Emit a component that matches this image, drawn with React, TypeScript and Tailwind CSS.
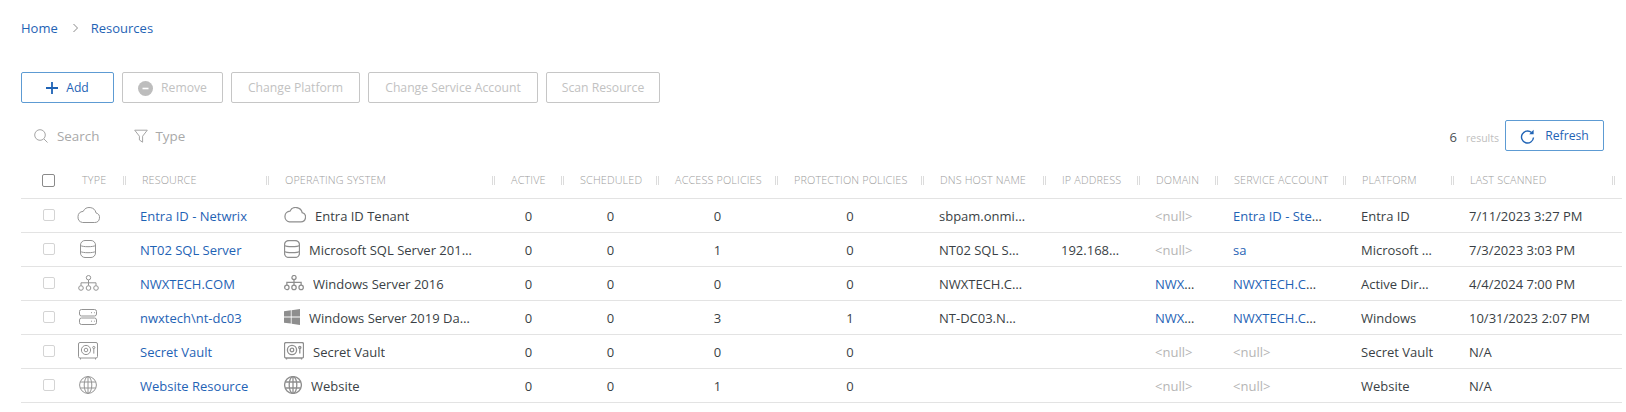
import React from "react";

const F = "font-['Open_Sans','Noto_Sans',sans-serif]";

type IP = { className?: string; w?: number };

const Cloud = ({ w = 23, className }: IP) => (
  <svg width={w} height={w * 16 / 23} viewBox="0 0 23 16" fill="none" stroke="currentColor" strokeWidth="1" className={className}>
    <path d="M5.6 15.5h12a4.9 4.9 0 0 0 1.4-9.6A6.8 6.8 0 0 0 6.2 4.4 5.6 5.6 0 0 0 5.6 15.5z" />
  </svg>
);
const Db = ({ w = 16, className }: IP) => (
  <svg width={w} height={w * 18 / 16} viewBox="0 0 16 18" fill="none" stroke="currentColor" strokeWidth="1" className={className}>
    <rect x="0.5" y="0.5" width="15" height="17" rx="4.5" />
    <path d="M0.5 5.5c2 1.6 13 1.6 15 0M0.5 11.5c2 1.6 13 1.6 15 0" />
  </svg>
);
const Tree = ({ w = 21, className }: IP) => (
  <svg width={w} height={w * 16 / 21} viewBox="0 0 21 16" fill="none" stroke="currentColor" strokeWidth="1" className={className}>
    <circle cx="10.5" cy="2.7" r="2.2" />
    <circle cx="3" cy="13" r="2.3" />
    <circle cx="10.5" cy="13" r="2.3" />
    <circle cx="18" cy="13" r="2.3" />
    <path d="M10.5 5v5.5M3 10.5V7.8h15v2.7" />
  </svg>
);
const ServerI = ({ w = 18, className }: IP) => (
  <svg width={w} height={w * 16 / 18} viewBox="0 0 18 16" fill="none" stroke="currentColor" strokeWidth="1" className={className}>
    <rect x="0.5" y="0.5" width="17" height="6.5" rx="2" />
    <rect x="0.5" y="9" width="17" height="6.5" rx="2" />
    <path d="M12 3.7h1M15 3.7h.8M12 12.2h1M15 12.2h.8" />
  </svg>
);
const Safe = ({ w = 20, className }: IP) => (
  <svg width={w} height={w * 18 / 20} viewBox="0 0 20 18" fill="none" stroke="currentColor" strokeWidth="1" className={className}>
    <rect x="0.5" y="0.5" width="19" height="15.5" rx="1.5" />
    <circle cx="8" cy="8" r="4.6" />
    <circle cx="8" cy="8" r="1.8" />
    <circle cx="15.8" cy="5.5" r="1.1" />
    <path d="M15.8 6.6v5M2.5 16v1.5M17.5 16v1.5" />
  </svg>
);
const Globe = ({ w = 18, className }: IP) => (
  <svg width={w} height={w} viewBox="0 0 18 18" fill="none" stroke="currentColor" strokeWidth="1" className={className}>
    <circle cx="9" cy="9" r="8.4" />
    <ellipse cx="9" cy="9" rx="3.8" ry="8.4" />
    <path d="M1.2 6h15.6M1.2 12h15.6M9 .6v16.8" />
  </svg>
);
const Win = ({ w = 16, className }: IP) => (
  <svg width={w} height={w} viewBox="0 0 16 16" fill="currentColor" className={className}>
    <path d="M0 2.3 6.8 1.3v6.2H0zM7.6 1.2 16 0v7.5H7.6zM0 8.4h6.8v6.2L0 13.7zM7.6 8.4H16V16l-8.4-1.2z" />
  </svg>
);

const Null = () => <span className="text-[#b5b5b5]">&lt;null&gt;</span>;
const Lnk = ({ children }: { children: React.ReactNode }) => <span className="text-[#1f63b5]">{children}</span>;

const cols = [
  ["", "w-[43px]"],
  ["TYPE", "w-[60px]"],
  ["RESOURCE", "w-[143px]"],
  ["OPERATING SYSTEM", "w-[226px]"],
  ["ACTIVE", "w-[69px]"],
  ["SCHEDULED", "w-[95px]"],
  ["ACCESS POLICIES", "w-[119px]"],
  ["PROTECTION POLICIES", "w-[146px]"],
  ["DNS HOST NAME", "w-[122px]"],
  ["IP ADDRESS", "w-[94px]"],
  ["DOMAIN", "w-[78px]"],
  ["SERVICE ACCOUNT", "w-[128px]"],
  ["PLATFORM", "w-[108px]"],
  ["LAST SCANNED", "w-[161px]"],
] as const;

const rows = [
  { T: Cloud, O: Cloud, ow: 22, res: "Entra ID - Netwrix", os: "Entra ID Tenant", a: 0, s: 0, ap: 0, pp: 0, dns: "sbpam.onmicrosoft.com", ip: "", dom: null, svc: "Entra ID - Steve Admin", plat: "Entra ID", last: "7/11/2023 3:27 PM" },
  { T: Db, O: Db, ow: 16, res: "NT02 SQL Server", os: "Microsoft SQL Server 2019 Standard", a: 0, s: 0, ap: 1, pp: 0, dns: "NT02 SQL Server", ip: "192.168.10.22", dom: null, svc: "sa", plat: "Microsoft SQL Server", last: "7/3/2023 3:03 PM" },
  { T: Tree, O: Tree, ow: 20, res: "NWXTECH.COM", os: "Windows Server 2016", a: 0, s: 0, ap: 0, pp: 0, dns: "NWXTECH.COM", ip: "", dom: "NWXTECH.COM", svc: "NWXTECH.COM Admin", plat: "Active Directory", last: "4/4/2024 7:00 PM" },
  { T: ServerI, O: Win, ow: 16, res: "nwxtech\\nt-dc03", os: "Windows Server 2019 Datacenter", a: 0, s: 0, ap: 3, pp: 1, dns: "NT-DC03.NWXTECH.COM", ip: "", dom: "NWXTECH.COM", svc: "NWXTECH.COM Admin", plat: "Windows", last: "10/31/2023 2:07 PM" },
  { T: Safe, O: Safe, ow: 20, res: "Secret Vault", os: "Secret Vault", a: 0, s: 0, ap: 0, pp: 0, dns: "", ip: "", dom: null, svc: null, plat: "Secret Vault", last: "N/A" },
  { T: Globe, O: Globe, ow: 18, res: "Website Resource", os: "Website", a: 0, s: 0, ap: 1, pp: 0, dns: "", ip: "", dom: null, svc: null, plat: "Website", last: "N/A" },
];

const td = "pl-[17px] pr-[17px] pt-[3px] truncate";
const tdNarrow = "pl-[17px] pr-[22px] pt-[3px] truncate";
const num = "text-center pl-[2px] pt-[3px]";

const btnOff = "h-[31px] pt-[1px] border border-[#c6c6c6] rounded-[2px] flex items-center justify-center gap-[8px] text-[#c2c2c2] text-[12.2px] bg-white";

export default function App() {
  return (
    <div className={`${F} w-[1626px] h-[412px] overflow-hidden bg-white pl-[21px] text-[#3a3f45] text-[13px]`}>
      <nav className="h-[72px] pt-[18px] flex items-start text-[13px] text-[#1f63b5]">
        <span className="leading-[20px]">Home</span>
        <svg width="8" height="10" viewBox="0 0 8 10" fill="none" stroke="#8a8a8a" strokeWidth="1" className="ml-[14px] mr-[11px] mt-[5px]"><path d="M1.5 1l4 4-4 4" /></svg>
        <span className="leading-[20px]">Resources</span>
      </nav>

      <div className="flex gap-[8px]">
        <button className="h-[31px] pt-[1px] w-[93px] border border-[#5d9bd3] rounded-[2px] flex items-center justify-center gap-[8px] text-[#1f63b5] text-[12.2px]">
          <svg width="12" height="12" viewBox="0 0 12 12" stroke="#1f63b5" strokeWidth="1.8"><path d="M6 0v12M0 6h12" /></svg>
          Add
        </button>
        <button className={`${btnOff} w-[101px]`}>
          <svg width="15" height="15" viewBox="0 0 15 15"><circle cx="7.5" cy="7.5" r="7.5" fill="#bdbdbd" /><path d="M4.5 7.5h6" stroke="#fff" strokeWidth="1.6" /></svg>
          Remove
        </button>
        <button className={`${btnOff} w-[129px]`}>Change Platform</button>
        <button className={`${btnOff} w-[170px]`}>Change Service Account</button>
        <button className={`${btnOff} w-[114px]`}>Scan Resource</button>
      </div>

      <div className="flex items-start justify-between h-[44px] pr-[22px] mt-[17px]">
        <div className="flex items-center pl-[13px] pt-[1px] text-[#a9a9a9] text-[13.4px] h-[31px]">
          <svg width="14" height="14" viewBox="0 0 14 14" fill="none" stroke="#a5a5a5" strokeWidth="1"><circle cx="6" cy="6" r="5.3" /><path d="M10 10l3.5 3.5" /></svg>
          <span className="ml-[9px]">Search</span>
          <svg width="14" height="14" viewBox="0 0 14 14" fill="none" stroke="#a5a5a5" strokeWidth="1" className="ml-[35px]"><path d="M.7 1.2h12.6L8.6 7.2v6L5.4 11V7.2z" /></svg>
          <span className="ml-[7px]">Type</span>
        </div>
        <div className="flex items-center">
          <span className="text-[#4a4f55] text-[13px] mt-[4px] -ml-[1px]">6</span>
          <span className="text-[#c0c0c0] text-[10.5px] ml-[9px] mr-[6px] mt-[6px]">results</span>
          <button className="w-[99px] h-[31px] pt-[1px] border border-[#5d9bd3] rounded-[2px] flex items-center justify-center gap-[10px] text-[#1f63b5] text-[12.2px]">
            <svg width="15" height="15" viewBox="0 0 15 15" fill="none" stroke="#1f63b5" strokeWidth="1.4"><path d="M13.5 8.5a6 6 0 1 1-2-5" /><path d="M13.6 .8v4.4H9.2z" fill="#1f63b5" stroke="none" /></svg>
            Refresh
          </button>
        </div>
      </div>

      <table className="table-fixed border-collapse w-[1601px]">
        <thead>
          <tr className="h-[34px] border-b border-[#e3e3e3]">
            {cols.map(([label, w], i) => (
              <th key={i} className={`${w} p-0 font-normal text-left relative`}>
                {i === 0 ? (
                  <span className="block w-[13px] h-[13px] ml-[21px] border-[1.5px] border-[#8a8a8a] rounded-[2px]" />
                ) : (
                  <>
                    <span className="block pl-[18px] pb-[1px] text-[10.8px] tracking-[0.15px] font-light text-[#9c9c9c] truncate">{label}</span>
                    <span className="absolute -right-[2px] top-[12px] w-[3px] h-[9px] border-x border-[#dcdcdc]" />
                  </>
                )}
              </th>
            ))}
            <th className="w-[9px] p-0" />
          </tr>
        </thead>
        <tbody>
          {rows.map((r) => (
            <tr key={r.res} className="h-[34px] border-b border-[#e3e3e3]">
              <td className="p-0"><span className="block w-[12px] h-[12px] ml-[22px] border-[1.5px] border-[#d4d4d4] rounded-[2px]" /></td>
              <td className="p-0"><span className="flex justify-center pr-[12px] text-[#949494]"><r.T /></span></td>
              <td className="pl-[16px] pr-[17px] pt-[3px] truncate"><Lnk>{r.res}</Lnk></td>
              <td className={r.os.includes("Datacenter") ? "pl-[17px] pr-[22px]" : "pl-[17px] pr-[17px]"}>
                <span className="flex items-center gap-[9px]">
                  <r.O w={r.ow} className="shrink-0 text-[#8e8e8e] stroke-[1.3px]" />
                  <span className="truncate pt-[3px]">{r.os}</span>
                </span>
              </td>
              <td className={num}>{r.a}</td>
              <td className={num}>{r.s}</td>
              <td className={num}>{r.ap}</td>
              <td className={num}>{r.pp}</td>
              <td className={r.dns === "NT02 SQL Server" ? tdNarrow : td}>{r.dns}</td>
              <td className={td}>{r.ip}</td>
              <td className={td}>{r.dom ? <Lnk>{r.dom}</Lnk> : <Null />}</td>
              <td className={r.svc === "NWXTECH.COM Admin" ? tdNarrow : td}>{r.svc ? <Lnk>{r.svc}</Lnk> : <Null />}</td>
              <td className={td}>{r.plat}</td>
              <td className={td}>{r.last}</td>
              <td className="p-0" />
            </tr>
          ))}
        </tbody>
      </table>
    </div>
  );
}
